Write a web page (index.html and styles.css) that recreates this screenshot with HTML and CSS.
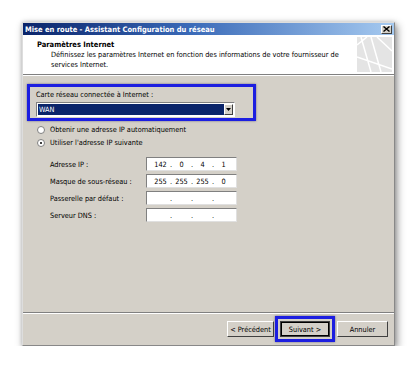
FILE: index.html
```html
<!DOCTYPE html>
<html lang="fr">
<head>
<meta charset="utf-8">
<link rel="stylesheet" href="styles.css">
</head>
<body>
<div class="window">
  <div class="titlebar">
    <span class="title">Mise en route - Assistant Configuration du réseau</span>
    <span class="close"><svg width="7" height="6" viewBox="0 0 7 6"><path d="M0.5 0.5 L6.5 5.5 M6.5 0.5 L0.5 5.5" stroke="#000" stroke-width="1.4"/></svg></span>
  </div>
  <div class="header">
    <div class="header-text">
      <div class="h-title">Paramètres Internet</div>
      <div class="h-desc">Définissez les paramètres Internet en fonction des informations de votre fournisseur de services Internet.</div>
    </div>
    <svg class="watermark" width="35" height="35" viewBox="0 0 35 35">
      <rect width="35" height="35" fill="#e4e4e4"/>
      <path d="M4 0 L14 35 M14 0 L24 35 M0 20 L35 32 M20 0 L35 14 M0 8 L10 0" stroke="#fff" stroke-width="1.5" fill="none"/>
    </svg>
  </div>
  <div class="sep"></div>
  <div class="content">
    <div class="highlight group">
      <div class="g-label">Carte réseau connectée à Internet :</div>
      <div class="select">
        <span class="sel-value">WAN</span>
        <span class="sel-btn"><svg width="5" height="3" viewBox="0 0 5 3"><path d="M0 0 H5 L2.5 3 Z" fill="#000"/></svg></span>
      </div>
    </div>
    <div class="radios">
      <label class="radio"><span class="dot"></span>Obtenir une adresse IP automatiquement</label>
      <label class="radio"><span class="dot on"></span>Utiliser l'adresse IP suivante</label>
    </div>
    <div class="fields">
      <div class="field"><span class="f-label">Adresse IP :</span><span class="ip"><span>142</span>.<span>0</span>.<span>4</span>.<span>1</span></span></div>
      <div class="field"><span class="f-label">Masque de sous-réseau :</span><span class="ip"><span>255</span>.<span>255</span>.<span>255</span>.<span>0</span></span></div>
      <div class="field"><span class="f-label">Passerelle par défaut :</span><span class="ip"><span></span>.<span></span>.<span></span>.<span></span></span></div>
      <div class="field"><span class="f-label">Serveur DNS :</span><span class="ip"><span></span>.<span></span>.<span></span>.<span></span></span></div>
    </div>
  </div>
  <div class="sep"></div>
  <div class="footer">
    <button class="btn prev">&lt; Précédent</button>
    <span class="highlight hl-btn"><button class="btn next">Suivant &gt;</button></span>
    <button class="btn cancel">Annuler</button>
  </div>
</div>
</body>
</html>
```

FILE: styles.css
```css
html, body {
  margin: 0;
  padding: 0;
  background: #fff;
}
body {
  font-family: "DejaVu Sans Condensed", "DejaVu Sans", sans-serif;
  font-size: 7.3px;
  color: #000;
}
.window {
  margin: 22px 0 0 22px;
  width: 373px;
  height: 324px;
  box-sizing: border-box;
  background: #d4d0c8;
  border: 1px solid #888;
  border-top-color: #ddd;
  border-left-color: #ddd;
  box-shadow: 2px 3px 8px rgba(0,0,0,0.45), 0 0 4px rgba(0,0,0,0.15);
  display: flex;
  flex-direction: column;
}
.titlebar {
  height: 12px;
  flex: none;
  background: linear-gradient(to right, #0a246a 0%, #3a6ab8 45%, #a6caf0 100%);
  display: flex;
  align-items: center;
  justify-content: space-between;
  padding: 0 2px 0 2px;
}
.title {
  color: #fff;
  font-weight: bold;
  font-size: 7.5px;
}
.close {
  width: 9px;
  height: 7px;
  background: #d4d0c8;
  border: 1px solid;
  border-color: #fff #404040 #404040 #fff;
  display: flex;
  align-items: center;
  justify-content: center;
}
.header {
  height: 39px;
  flex: none;
  background: #fff;
  display: flex;
  justify-content: space-between;
  align-items: center;
  padding: 0 2px 0 14px;
}
.header-text {
  padding-top: 1px;
}
.h-title {
  font-weight: bold;
  font-size: 7.5px;
  line-height: 10px;
}
.h-desc {
  padding-left: 14px;
  width: 296px;
  line-height: 10px;
}
.watermark {
  display: block;
}
.sep {
  height: 0;
  flex: none;
  border-top: 1px solid #808080;
  border-bottom: 1px solid #fff;
}
.content {
  flex: 1;
  padding: 8px 0 0 4px;
}
.highlight {
  border: 3px solid #1c1ee0;
  box-shadow: 0 0 2px rgba(0,0,80,0.5);
}
.group {
  width: 217px;
  height: 31px;
  padding-left: 6px;
  display: flex;
  flex-direction: column;
}
.g-label {
  line-height: 10px;
  margin-top: 3px;
}
.select {
  margin-top: 2px;
  width: 199px;
  height: 15px;
  box-sizing: border-box;
  background: #fff;
  border: 1px solid;
  border-color: #808080 #fff #fff #808080;
  display: flex;
  padding: 1px;
}
.sel-value {
  flex: 1;
  background: #0a246a;
  color: #fff;
  line-height: 11px;
  padding-left: 1px;
}
.sel-btn {
  width: 9px;
  background: #d4d0c8;
  box-sizing: border-box;
  border: 1px solid;
  border-color: #fff #404040 #404040 #fff;
  display: flex;
  align-items: center;
  justify-content: center;
}
.radios {
  margin-top: 4px;
  padding-left: 10px;
  display: flex;
  flex-direction: column;
  gap: 3px;
}
.radio {
  display: flex;
  align-items: center;
  gap: 5px;
  line-height: 10px;
}
.dot {
  width: 6px;
  height: 6px;
  border-radius: 50%;
  background: #fff;
  border: 1px solid #808080;
  display: flex;
  align-items: center;
  justify-content: center;
}
.dot.on::after {
  content: "";
  width: 2px;
  height: 2px;
  border-radius: 50%;
  background: #000;
}
.fields {
  margin-top: 9px;
  padding-left: 23px;
  display: flex;
  flex-direction: column;
  gap: 3px;
}
.field {
  display: flex;
  align-items: center;
}
.f-label {
  width: 96px;
}
.ip {
  width: 91px;
  height: 14px;
  box-sizing: border-box;
  background: #fff;
  border: 1px solid;
  border-color: #808080 #e0e0e0 #e0e0e0 #808080;
  display: flex;
  align-items: center;
  padding: 0 3px 0 4px;
}
.ip span {
  flex: 1;
  text-align: center;
}
.footer {
  height: 31px;
  flex: none;
  display: flex;
  align-items: flex-start;
  justify-content: flex-end;
  padding: 2px 6px 0 0;
  box-sizing: border-box;
}
.btn {
  font: inherit;
  height: 16px;
  box-sizing: border-box;
  background: #d4d0c8;
  border: 1px solid;
  border-color: #fff #404040 #404040 #fff;
  padding: 0;
  margin-top: 5px;
  color: #000;
}
.prev { width: 47px; margin-right: 1px; }
.hl-btn {
  padding: 2px;
  display: flex;
}
.next {
  width: 50px;
  margin-top: 0;
  border-color: #404040;
  outline: 1px solid #000;
  outline-offset: -2px;
}
.cancel { width: 51px; margin-left: 2px; }
```
